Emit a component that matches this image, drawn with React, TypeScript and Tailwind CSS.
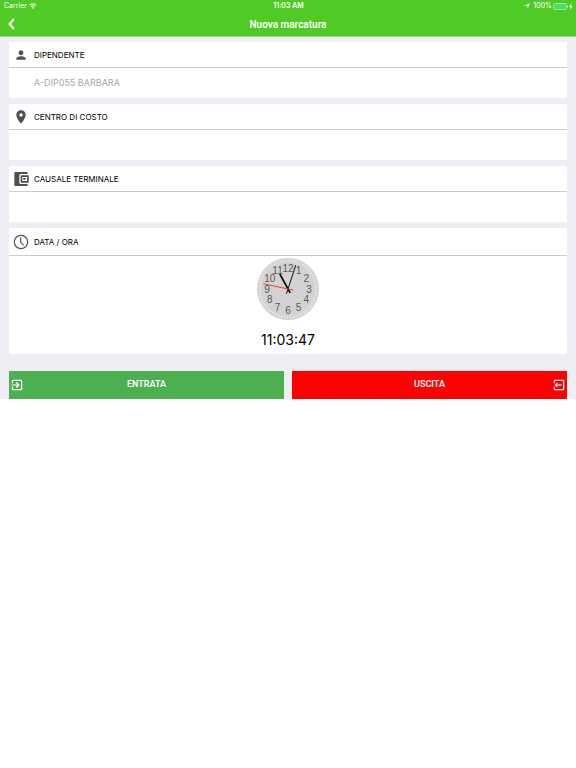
import React, { useState } from 'react'
import { MdPerson, MdPlace, MdExitToApp } from 'react-icons/md'

const CLOCK = { hours: 11, minutes: 3, seconds: 47 }

function WifiIcon() {
  return (
    <svg viewBox="0 0 16 12" className="w-2 h-1.5" fill="none" stroke="#fff" strokeWidth="2">
      <path d="M1 4.5a10 10 0 0 1 14 0M3.8 7.4a6 6 0 0 1 8.4 0" />
      <path d="M8 12 5.6 9.6a3.4 3.4 0 0 1 4.8 0z" fill="#fff" stroke="none" />
    </svg>
  )
}

function WalletIcon() {
  return (
    <svg viewBox="0 0 24 24" className="w-4 h-4" fill="#4f4f4f">
      <path d="M22 19.5V21a1.5 1.5 0 0 1-1.5 1.5h-17A1.5 1.5 0 0 1 2 21V3a1.5 1.5 0 0 1 1.5-1.5h17A1.5 1.5 0 0 1 22 3v1.5H11.5a2 2 0 0 0-2 2v11a2 2 0 0 0 2 2z" />
      <path fillRule="evenodd" d="M11.5 6.5h12v11h-12zM14 9v6h7V9z" />
      <rect x="15.5" y="10.5" width="3" height="3" />
    </svg>
  )
}

function ClockIcon() {
  return (
    <svg viewBox="0 0 24 24" className="w-4 h-4" fill="none" stroke="#555" strokeWidth="1.8">
      <circle cx="12" cy="12" r="10" />
      <path d="M11.5 5v7.5L16 17" />
    </svg>
  )
}

function LeaveIcon() {
  return (
    <svg viewBox="0 0 24 24" className="w-3.5 h-3.5" fill="#fff">
      <path d="M19 3H5a2 2 0 0 0-2 2v4h2V5h14v14H5v-4H3v4a2 2 0 0 0 2 2h14a2 2 0 0 0 2-2V5a2 2 0 0 0-2-2z" />
      <path d="M10 9.4 8.600 8l-4 4 4 4 1.400-1.400L8.400 13H17v-2H8.400z" />
    </svg>
  )
}

function BatteryIcon() {
  return (
    <svg viewBox="0 0 40 14" className="w-5 h-[7px]">
      <rect x="1" y="1" width="26" height="12" rx="2" fill="#4cdc6e" stroke="#b4ec9f" strokeWidth="1.5" />
      <path d="M28.5 5v4q1.500-.5 1.500-2t-1.500-2z" fill="#fff" />
      <path d="M37 0l-5 8h3l-1 6 5-8h-3z" fill="#fff" />
    </svg>
  )
}

function AnalogClock({ hours, minutes, seconds }: typeof CLOCK) {
  const minuteAngle = minutes * 6
  const hourAngle = (hours % 12) * 30 + minutes / 2

  return (
    <svg viewBox="-62 -62 124 124" className="w-[62px] h-[62px]" role="img" aria-label="Orologio">
      <circle r="62" fill="#d2d2d2" />
      <circle r="56.5" fill="none" stroke="#ececec" strokeWidth="5" strokeDasharray="2.2 3.717" />
      {Array.from({ length: 12 }, (_, i) => {
        const angle = ((i + 1) * Math.PI) / 6
        return (
          <text
            key={i}
            x={Math.sin(angle) * 42}
            y={-Math.cos(angle) * 42 + 7}
            textAnchor="middle"
            fontSize="20"
            fill="#5a5a5a"
            className="font-['Liberation_Sans',sans-serif]"
          >
            {i + 1}
          </text>
        )
      })}
      <path d="M0 9V-34" stroke="#000" strokeWidth="3.5" transform={`rotate(${hourAngle})`} />
      <path d="M0 10V-50" stroke="#222" strokeWidth="2" transform={`rotate(${minuteAngle})`} />
      <path d="M0 11V-50" stroke="#f0402a" strokeWidth="1.8" transform={`rotate(${seconds * 6})`} />
    </svg>
  )
}

type FieldProps = {
  id: string
  label: string
  icon: React.ReactNode
  initial?: string
}

function Field({ id, label, icon, initial = '' }: FieldProps) {
  const [value, setValue] = useState(initial)

  return (
    <div className="bg-white">
      <label htmlFor={id} className="h-[26px] flex items-center gap-[5px] pl-1 border-b border-[#ccc] text-[8px]">
        <span className="w-4 flex justify-center">{icon}</span>
        {label}
      </label>
      <input
        id={id}
        type="text"
        value={value}
        onChange={(e) => setValue(e.target.value)}
        className="block w-full h-[30px] pl-[25px] pb-0.5 text-[9px] text-[#aaa] outline-none"
      />
    </div>
  )
}

export default function App() {
  const time = [CLOCK.hours, CLOCK.minutes, CLOCK.seconds]
    .map((n) => n.toString().padStart(2, '0'))
    .join(':')

  return (
    <div className="min-h-screen bg-white font-['Inter',sans-serif] text-black">
      <header className="bg-[#50cb25] text-white border-b border-[#9bdc86]">
        <div className="h-3 pl-1 pr-[3px] grid grid-cols-3 items-center text-[7px]">
          <div className="flex items-center gap-0.5">
            Carrier
            <WifiIcon />
          </div>
          <div className="text-center font-semibold">11:03 AM</div>
          <div className="flex items-center justify-end gap-px">
            <svg viewBox="0 0 12 12" className="w-1.5 h-1.5 mr-0.5" fill="#fff">
              <path d="M12 0 7 12V6H0z" />
            </svg>
            100%
            <BatteryIcon />
          </div>
        </div>
        <div className="h-6 px-[3px] grid grid-cols-[16px_1fr_16px] items-center">
          <button type="button" aria-label="Indietro" className="flex justify-center">
            <svg viewBox="0 0 14 24" className="w-[7px] h-3" fill="none" stroke="#fff" strokeWidth="4">
              <path d="M12 2 3 12l9 10" />
            </svg>
          </button>
          <h1 className="text-center font-['Roboto',sans-serif] text-[10px] font-semibold">Nuova marcatura</h1>
        </div>
      </header>

      <main className="bg-[#efeef4] px-[9px] pt-[5px]">
        <div className="flex flex-col gap-1.5">
          <Field id="dipendente" label="DIPENDENTE" initial="A-DIP055 BARBARA" icon={<MdPerson size={14} color="#4f4f4f" />} />
          <Field id="centro" label="CENTRO DI COSTO" icon={<MdPlace size={16} color="#4f4f4f" />} />
          <Field id="causale" label="CAUSALE TERMINALE" icon={<WalletIcon />} />

          <section className="bg-white">
            <h2 className="h-7 flex items-center gap-[5px] pl-1 border-b border-[#ccc] text-[8px]">
              <span className="w-4 flex justify-center">
                <ClockIcon />
              </span>
              DATA / ORA
            </h2>
            <div className="flex flex-col items-center gap-2.5 pt-0.5 pb-1">
              <AnalogClock {...CLOCK} />
              <time className="text-sm leading-5">{time}</time>
            </div>
          </section>
        </div>

        <div className="grid grid-cols-2 gap-2 pt-[17px] font-['Roboto',sans-serif] text-[9px] font-semibold text-white">
          <button type="button" className="h-7 px-px grid grid-cols-[14px_1fr_14px] items-center bg-[#4caf50]">
            <MdExitToApp size={14} />
            <span>ENTRATA</span>
          </button>
          <button type="button" className="h-7 px-px grid grid-cols-[14px_1fr_14px] items-center bg-[#ff0000]">
            <span className="col-start-2">USCITA</span>
            <LeaveIcon />
          </button>
        </div>
      </main>
    </div>
  )
}
